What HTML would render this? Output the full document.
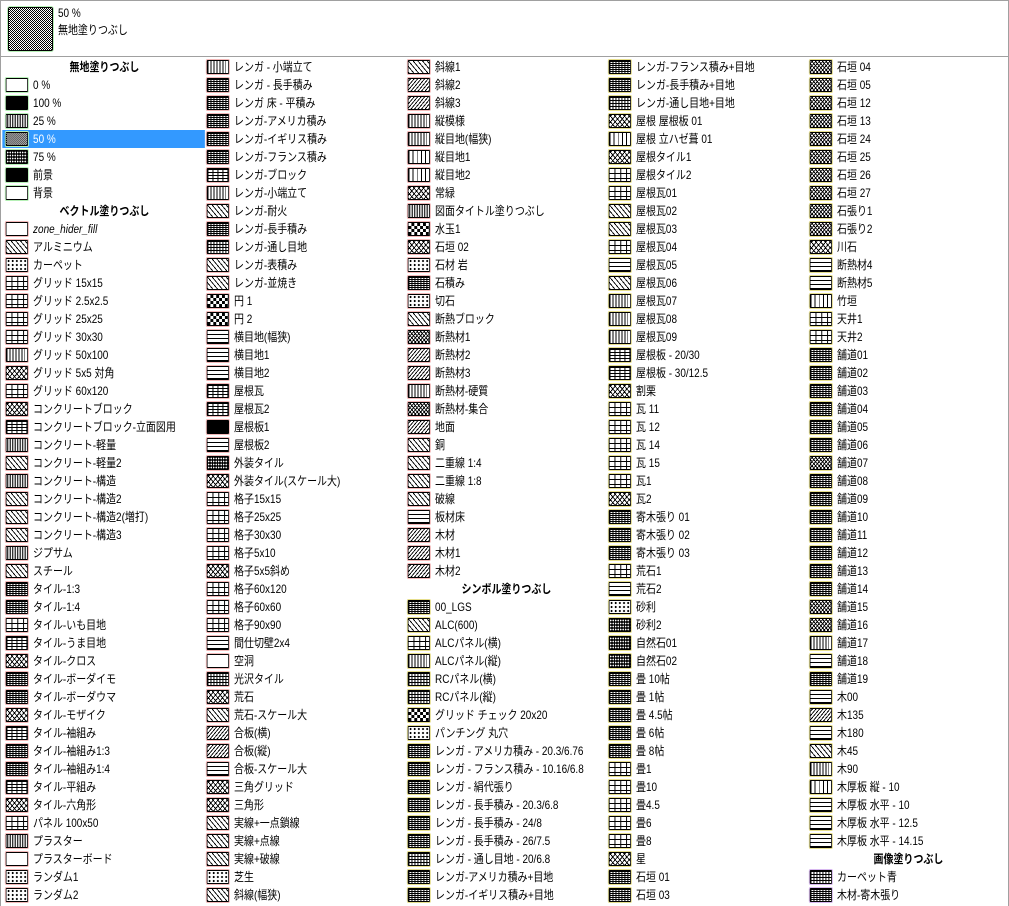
<!DOCTYPE html>
<html><head><meta charset="utf-8">
<style>
*{margin:0;padding:0;box-sizing:border-box}
body{width:1009px;height:906px;background:#fff;font-family:"Liberation Sans","Noto Sans CJK JP",sans-serif;font-size:12px;color:#000;position:relative;overflow:hidden}
#frame{position:absolute;left:0;top:0;width:1009px;height:906px;border:1px solid #a0a0a0;border-bottom:none}
#hdr{position:absolute;left:0;top:0;width:1009px;height:57px;border-bottom:1px solid #a0a0a0}
#big{position:absolute;left:8px;top:7px;width:45px;height:44px;border:1px solid #000;border-radius:2px;box-shadow:0 0 0 1px #b6f0b6;background:repeating-conic-gradient(#000 0 25%,#fff 0 50%) 0 0/2px 2px}
#hdr .t{position:absolute;left:58px;transform:scaleX(.83);transform-origin:left;line-height:16px;white-space:nowrap}
.col{position:absolute;top:58px;width:242px;transform:scaleX(.83);transform-origin:0 0}
.r{height:18px;line-height:18px;white-space:nowrap;position:relative;padding-left:35px}
.r i{position:absolute;left:2.4px;top:2px;width:26.5px;height:14px;border:1px solid #000;outline:1px solid #f3b8b8;background:#fff;border-radius:1px}
.hd{font-weight:bold;text-align:center;padding-left:0}
.sel{background:#3399ff;color:#fff;margin-left:-2.4px;padding-left:37.4px}
.sel i{left:4.8px}
.gn i{outline-color:#b6f0b6}
.yl i{outline-color:#e6de8c}
.pu i{outline-color:#d8b8f0}
.b{background:#000!important}
.p25{background:radial-gradient(circle,#000 0 .8px,#fff 1px) 0 0/3px 2px!important}
.p50{background:repeating-conic-gradient(#000 0 25%,#fff 0 50%) 0 0/2.4px 2px!important}
.p75{background:#000 radial-gradient(circle,#fff 0 .8px,transparent 1px) 0 0/3px 3px!important}
.h{background:repeating-linear-gradient(45deg,#000 0 1px,#fff 1px 4px)!important}
.hb{background:repeating-linear-gradient(-45deg,#000 0 1px,#fff 1px 3px)!important}
.g{background:linear-gradient(#000 1px,transparent 1px) 0 -1px/7px 5px,linear-gradient(90deg,#000 1px,#fff 1px) -1px 0/7px 5px!important}
.gf{background:linear-gradient(#000 1px,transparent 1px) 0 0/3.6px 3px,linear-gradient(90deg,#000 1px,#fff 1px) 0 0/3.6px 3px!important}
.k{background:linear-gradient(#000 1px,transparent 1px) 0 0/5px 3px,linear-gradient(90deg,#000 1px,#fff 1px) 0 0/6px 3px!important}
.kd{background:linear-gradient(#000 1px,transparent 1px) 0 0/3.6px 2px,linear-gradient(90deg,#000 1px,#fff 1px) 0 0/3.6px 2px!important}
.v{background:repeating-linear-gradient(90deg,#000 0 1px,#fff 1px 3.6px)!important}
.vw{background:repeating-linear-gradient(90deg,#000 0 1px,#fff 1px 5px)!important}
.hl{background:repeating-linear-gradient(0deg,#000 0 1px,#fff 1px 4px)!important}
.d{background:radial-gradient(circle,#000 0 1px,#fff 1.3px) 0 0/5px 4px!important}
.x{background:repeating-linear-gradient(45deg,#000 0 1px,transparent 1px 4px),repeating-linear-gradient(-45deg,#000 0 1px,#fff 1px 4px)!important}
.xd{background:repeating-linear-gradient(45deg,#000 0 1px,transparent 1px 3px),repeating-linear-gradient(-45deg,#000 0 1px,#fff 1px 3px)!important}
.ck{background:repeating-conic-gradient(#000 0 25%,#fff 0 50%) 0 0/7px 6px!important}
</style></head><body>
<div id="frame"></div>
<div id="hdr"><div id="big"></div><div class="t" style="top:5px">50 %</div><div class="t" style="top:22px">無地塗りつぶし</div></div>

<div class="col" style="left:4px">
<div class="r hd">無地塗りつぶし</div>
<div class="r gn"><i></i>0 %</div>
<div class="r gn"><i class="b"></i>100 %</div>
<div class="r gn"><i class="p25"></i>25 %</div>
<div class="r gn sel"><i class="p50"></i>50 %</div>
<div class="r gn"><i class="p75"></i>75 %</div>
<div class="r gn"><i class="b"></i>前景</div>
<div class="r gn"><i></i>背景</div>
<div class="r hd">ベクトル塗りつぶし</div>
<div class="r"><i></i><em>zone_hider_fill</em></div>
<div class="r"><i class="h"></i>アルミニウム</div>
<div class="r"><i class="d"></i>カーペット</div>
<div class="r"><i class="g"></i>グリッド 15x15</div>
<div class="r"><i class="g"></i>グリッド 2.5x2.5</div>
<div class="r"><i class="g"></i>グリッド 25x25</div>
<div class="r"><i class="g"></i>グリッド 30x30</div>
<div class="r"><i class="v"></i>グリッド 50x100</div>
<div class="r"><i class="x"></i>グリッド 5x5 対角</div>
<div class="r"><i class="g"></i>グリッド 60x120</div>
<div class="r"><i class="x"></i>コンクリートブロック</div>
<div class="r"><i class="k"></i>コンクリートブロック-立面図用</div>
<div class="r"><i class="p25"></i>コンクリート-軽量</div>
<div class="r"><i class="h"></i>コンクリート-軽量2</div>
<div class="r"><i class="p25"></i>コンクリート-構造</div>
<div class="r"><i class="h"></i>コンクリート-構造2</div>
<div class="r"><i class="h"></i>コンクリート-構造2(増打)</div>
<div class="r"><i class="h"></i>コンクリート-構造3</div>
<div class="r"><i class="p25"></i>ジプサム</div>
<div class="r"><i class="h"></i>スチール</div>
<div class="r"><i class="kd"></i>タイル-1:3</div>
<div class="r"><i class="kd"></i>タイル-1:4</div>
<div class="r"><i class="g"></i>タイル-いも目地</div>
<div class="r"><i class="k"></i>タイル-うま目地</div>
<div class="r"><i class="x"></i>タイル-クロス</div>
<div class="r"><i class="kd"></i>タイル-ボーダイモ</div>
<div class="r"><i class="kd"></i>タイル-ボーダウマ</div>
<div class="r"><i class="x"></i>タイル-モザイク</div>
<div class="r"><i class="k"></i>タイル-袖組み</div>
<div class="r"><i class="kd"></i>タイル-袖組み1:3</div>
<div class="r"><i class="kd"></i>タイル-袖組み1:4</div>
<div class="r"><i class="k"></i>タイル-平組み</div>
<div class="r"><i class="x"></i>タイル-六角形</div>
<div class="r"><i class="g"></i>パネル 100x50</div>
<div class="r"><i class="p25"></i>プラスター</div>
<div class="r"><i></i>プラスターボード</div>
<div class="r"><i class="d"></i>ランダム1</div>
<div class="r"><i class="d"></i>ランダム2</div>
</div>

<div class="col" style="left:205px">
<div class="r"><i class="v"></i>レンガ - 小端立て</div>
<div class="r"><i class="kd"></i>レンガ - 長手積み</div>
<div class="r"><i class="kd"></i>レンガ 床 - 平積み</div>
<div class="r"><i class="kd"></i>レンガ-アメリカ積み</div>
<div class="r"><i class="kd"></i>レンガ-イギリス積み</div>
<div class="r"><i class="kd"></i>レンガ-フランス積み</div>
<div class="r"><i class="k"></i>レンガ-ブロック</div>
<div class="r"><i class="v"></i>レンガ-小端立て</div>
<div class="r"><i class="h"></i>レンガ-耐火</div>
<div class="r"><i class="kd"></i>レンガ-長手積み</div>
<div class="r"><i class="gf"></i>レンガ-通し目地</div>
<div class="r"><i class="h"></i>レンガ-表積み</div>
<div class="r"><i class="h"></i>レンガ-並焼き</div>
<div class="r"><i class="ck"></i>円 1</div>
<div class="r"><i class="ck"></i>円 2</div>
<div class="r"><i class="hl"></i>横目地(幅狭)</div>
<div class="r"><i class="hl"></i>横目地1</div>
<div class="r"><i class="hl"></i>横目地2</div>
<div class="r"><i class="k"></i>屋根瓦</div>
<div class="r"><i class="k"></i>屋根瓦2</div>
<div class="r"><i class="b"></i>屋根板1</div>
<div class="r"><i class="hl"></i>屋根板2</div>
<div class="r"><i class="p75"></i>外装タイル</div>
<div class="r"><i class="x"></i>外装タイル(スケール大)</div>
<div class="r"><i class="g"></i>格子15x15</div>
<div class="r"><i class="g"></i>格子25x25</div>
<div class="r"><i class="g"></i>格子30x30</div>
<div class="r"><i class="g"></i>格子5x10</div>
<div class="r"><i class="x"></i>格子5x5斜め</div>
<div class="r"><i class="g"></i>格子60x120</div>
<div class="r"><i class="g"></i>格子60x60</div>
<div class="r"><i class="g"></i>格子90x90</div>
<div class="r"><i class="hl"></i>間仕切壁2x4</div>
<div class="r"><i></i>空洞</div>
<div class="r"><i class="gf"></i>光沢タイル</div>
<div class="r"><i class="x"></i>荒石</div>
<div class="r"><i class="h"></i>荒石-スケール大</div>
<div class="r"><i class="hb"></i>合板(横)</div>
<div class="r"><i class="hb"></i>合板(縦)</div>
<div class="r"><i class="hl"></i>合板-スケール大</div>
<div class="r"><i class="x"></i>三角グリッド</div>
<div class="r"><i class="x"></i>三角形</div>
<div class="r"><i class="h"></i>実線+一点鎖線</div>
<div class="r"><i class="h"></i>実線+点線</div>
<div class="r"><i class="h"></i>実線+破線</div>
<div class="r"><i class="d"></i>芝生</div>
<div class="r"><i class="h"></i>斜線(幅狭)</div>
</div>

<div class="col" style="left:406px">
<div class="r"><i class="h"></i>斜線1</div>
<div class="r"><i class="hb"></i>斜線2</div>
<div class="r"><i class="hb"></i>斜線3</div>
<div class="r"><i class="v"></i>縦模様</div>
<div class="r"><i class="v"></i>縦目地(幅狭)</div>
<div class="r"><i class="vw"></i>縦目地1</div>
<div class="r"><i class="vw"></i>縦目地2</div>
<div class="r"><i class="x"></i>常緑</div>
<div class="r"><i class="p25"></i>図面タイトル塗りつぶし</div>
<div class="r"><i class="ck"></i>水玉1</div>
<div class="r"><i class="x"></i>石垣 02</div>
<div class="r"><i class="d"></i>石材 岩</div>
<div class="r"><i class="kd"></i>石積み</div>
<div class="r"><i class="d"></i>切石</div>
<div class="r"><i class="h"></i>断熱ブロック</div>
<div class="r"><i class="xd"></i>断熱材1</div>
<div class="r"><i class="hb"></i>断熱材2</div>
<div class="r"><i class="hb"></i>断熱材3</div>
<div class="r"><i class="v"></i>断熱材-硬質</div>
<div class="r"><i class="xd"></i>断熱材-集合</div>
<div class="r"><i class="hb"></i>地面</div>
<div class="r"><i class="h"></i>銅</div>
<div class="r"><i class="h"></i>二重線 1:4</div>
<div class="r"><i class="h"></i>二重線 1:8</div>
<div class="r"><i class="h"></i>破線</div>
<div class="r"><i class="hl"></i>板材床</div>
<div class="r"><i class="hb"></i>木材</div>
<div class="r"><i class="hb"></i>木材1</div>
<div class="r"><i class="hb"></i>木材2</div>
<div class="r hd">シンボル塗りつぶし</div>
<div class="r yl"><i class="kd"></i>00_LGS</div>
<div class="r yl"><i class="h"></i>ALC(600)</div>
<div class="r yl"><i class="g"></i>ALCパネル(横)</div>
<div class="r yl"><i class="v"></i>ALCパネル(縦)</div>
<div class="r yl"><i class="gf"></i>RCパネル(横)</div>
<div class="r yl"><i class="gf"></i>RCパネル(縦)</div>
<div class="r yl"><i class="ck"></i>グリッド チェック 20x20</div>
<div class="r yl"><i class="d"></i>パンチング 丸穴</div>
<div class="r yl"><i class="kd"></i>レンガ - アメリカ積み - 20.3/6.76</div>
<div class="r yl"><i class="kd"></i>レンガ - フランス積み - 10.16/6.8</div>
<div class="r yl"><i class="kd"></i>レンガ - 絹代張り</div>
<div class="r yl"><i class="kd"></i>レンガ - 長手積み - 20.3/6.8</div>
<div class="r yl"><i class="kd"></i>レンガ - 長手積み - 24/8</div>
<div class="r yl"><i class="kd"></i>レンガ - 長手積み - 26/7.5</div>
<div class="r yl"><i class="gf"></i>レンガ - 通し目地 - 20/6.8</div>
<div class="r yl"><i class="kd"></i>レンガ-アメリカ積み+目地</div>
<div class="r yl"><i class="kd"></i>レンガ-イギリス積み+目地</div>
</div>

<div class="col" style="left:607px">
<div class="r yl"><i class="kd"></i>レンガ-フランス積み+目地</div>
<div class="r yl"><i class="kd"></i>レンガ-長手積み+目地</div>
<div class="r yl"><i class="gf"></i>レンガ-通し目地+目地</div>
<div class="r yl"><i class="x"></i>屋根 屋根板 01</div>
<div class="r yl"><i class="vw"></i>屋根 立ハゼ葺 01</div>
<div class="r yl"><i class="x"></i>屋根タイル1</div>
<div class="r yl"><i class="g"></i>屋根タイル2</div>
<div class="r yl"><i class="g"></i>屋根瓦01</div>
<div class="r yl"><i class="h"></i>屋根瓦02</div>
<div class="r yl"><i class="h"></i>屋根瓦03</div>
<div class="r yl"><i class="g"></i>屋根瓦04</div>
<div class="r yl"><i class="hl"></i>屋根瓦05</div>
<div class="r yl"><i class="h"></i>屋根瓦06</div>
<div class="r yl"><i class="v"></i>屋根瓦07</div>
<div class="r yl"><i class="v"></i>屋根瓦08</div>
<div class="r yl"><i class="v"></i>屋根瓦09</div>
<div class="r yl"><i class="k"></i>屋根板 - 20/30</div>
<div class="r yl"><i class="k"></i>屋根板 - 30/12.5</div>
<div class="r yl"><i class="x"></i>割栗</div>
<div class="r yl"><i class="g"></i>瓦 11</div>
<div class="r yl"><i class="g"></i>瓦 12</div>
<div class="r yl"><i class="g"></i>瓦 14</div>
<div class="r yl"><i class="g"></i>瓦 15</div>
<div class="r yl"><i class="g"></i>瓦1</div>
<div class="r yl"><i class="x"></i>瓦2</div>
<div class="r yl"><i class="kd"></i>寄木張り 01</div>
<div class="r yl"><i class="kd"></i>寄木張り 02</div>
<div class="r yl"><i class="kd"></i>寄木張り 03</div>
<div class="r yl"><i class="g"></i>荒石1</div>
<div class="r yl"><i class="hl"></i>荒石2</div>
<div class="r yl"><i class="d"></i>砂利</div>
<div class="r yl"><i class="p75"></i>砂利2</div>
<div class="r yl"><i class="p75"></i>自然石01</div>
<div class="r yl"><i class="p75"></i>自然石02</div>
<div class="r yl"><i class="kd"></i>畳 10帖</div>
<div class="r yl"><i class="kd"></i>畳 1帖</div>
<div class="r yl"><i class="kd"></i>畳 4.5帖</div>
<div class="r yl"><i class="kd"></i>畳 6帖</div>
<div class="r yl"><i class="kd"></i>畳 8帖</div>
<div class="r yl"><i class="g"></i>畳1</div>
<div class="r yl"><i class="g"></i>畳10</div>
<div class="r yl"><i class="g"></i>畳4.5</div>
<div class="r yl"><i class="g"></i>畳6</div>
<div class="r yl"><i class="g"></i>畳8</div>
<div class="r yl"><i class="x"></i>星</div>
<div class="r yl"><i class="kd"></i>石垣 01</div>
<div class="r yl"><i class="kd"></i>石垣 03</div>
</div>

<div class="col" style="left:808px">
<div class="r yl"><i class="xd"></i>石垣 04</div>
<div class="r yl"><i class="xd"></i>石垣 05</div>
<div class="r yl"><i class="xd"></i>石垣 12</div>
<div class="r yl"><i class="xd"></i>石垣 13</div>
<div class="r yl"><i class="xd"></i>石垣 24</div>
<div class="r yl"><i class="xd"></i>石垣 25</div>
<div class="r yl"><i class="xd"></i>石垣 26</div>
<div class="r yl"><i class="xd"></i>石垣 27</div>
<div class="r yl"><i class="xd"></i>石張り1</div>
<div class="r yl"><i class="xd"></i>石張り2</div>
<div class="r yl"><i class="x"></i>川石</div>
<div class="r yl"><i class="hl"></i>断熱材4</div>
<div class="r yl"><i class="hl"></i>断熱材5</div>
<div class="r yl"><i class="vw"></i>竹垣</div>
<div class="r yl"><i class="g"></i>天井1</div>
<div class="r yl"><i class="g"></i>天井2</div>
<div class="r yl"><i class="kd"></i>舗道01</div>
<div class="r yl"><i class="kd"></i>舗道02</div>
<div class="r yl"><i class="kd"></i>舗道03</div>
<div class="r yl"><i class="kd"></i>舗道04</div>
<div class="r yl"><i class="kd"></i>舗道05</div>
<div class="r yl"><i class="kd"></i>舗道06</div>
<div class="r yl"><i class="xd"></i>舗道07</div>
<div class="r yl"><i class="kd"></i>舗道08</div>
<div class="r yl"><i class="kd"></i>舗道09</div>
<div class="r yl"><i class="kd"></i>舗道10</div>
<div class="r yl"><i class="kd"></i>舗道11</div>
<div class="r yl"><i class="kd"></i>舗道12</div>
<div class="r yl"><i class="kd"></i>舗道13</div>
<div class="r yl"><i class="kd"></i>舗道14</div>
<div class="r yl"><i class="xd"></i>舗道15</div>
<div class="r yl"><i class="xd"></i>舗道16</div>
<div class="r yl"><i class="v"></i>舗道17</div>
<div class="r yl"><i class="hl"></i>舗道18</div>
<div class="r yl"><i class="kd"></i>舗道19</div>
<div class="r yl"><i class="hl"></i>木00</div>
<div class="r yl"><i class="hb"></i>木135</div>
<div class="r yl"><i class="hl"></i>木180</div>
<div class="r yl"><i class="h"></i>木45</div>
<div class="r yl"><i class="v"></i>木90</div>
<div class="r yl"><i class="vw"></i>木厚板 縦 - 10</div>
<div class="r yl"><i class="hl"></i>木厚板 水平 - 10</div>
<div class="r yl"><i class="hl"></i>木厚板 水平 - 12.5</div>
<div class="r yl"><i class="hl"></i>木厚板 水平 - 14.15</div>
<div class="r hd">画像塗りつぶし</div>
<div class="r pu"><i class="gf"></i>カーペット青</div>
<div class="r pu"><i class="kd"></i>木材-寄木張り</div>
</div>
</body></html>
